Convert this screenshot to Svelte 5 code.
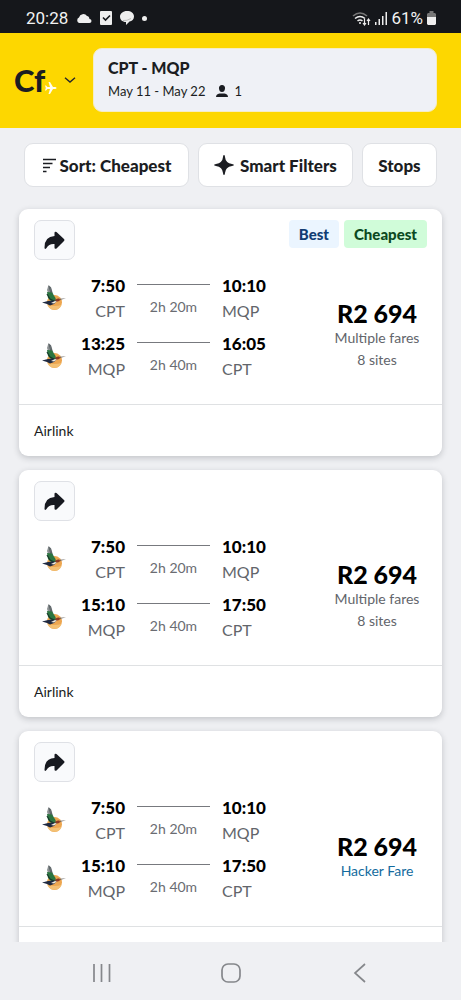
<script lang="ts">
  interface Leg {
    depart: string;
    from: string;
    duration: string;
    arrive: string;
    to: string;
  }

  interface Flight {
    badges: string[];
    legs: Leg[];
    price: string;
    notes: string[];
    hacker: boolean;
    airline: string;
  }

  const outbound: Leg = { depart: '7:50', from: 'CPT', duration: '2h 20m', arrive: '10:10', to: 'MQP' };
  const lateReturn: Leg = { depart: '15:10', from: 'MQP', duration: '2h 40m', arrive: '17:50', to: 'CPT' };

  const flights: Flight[] = [
    {
      badges: ['Best', 'Cheapest'],
      legs: [outbound, { depart: '13:25', from: 'MQP', duration: '2h 40m', arrive: '16:05', to: 'CPT' }],
      price: 'R2 694',
      notes: ['Multiple fares', '8 sites'],
      hacker: false,
      airline: 'Airlink'
    },
    {
      badges: [],
      legs: [outbound, lateReturn],
      price: 'R2 694',
      notes: ['Multiple fares', '8 sites'],
      hacker: false,
      airline: 'Airlink'
    },
    {
      badges: [],
      legs: [outbound, lateReturn],
      price: 'R2 694',
      notes: ['Hacker Fare'],
      hacker: true,
      airline: ''
    }
  ];
</script>

{#snippet bird()}
  <svg class="bird" viewBox="0 0 24 26" width="24" height="26" aria-hidden="true">
    <circle cx="12.500" cy="17.500" r="7.500" fill="#eda650" />
    <path d="M5.500 20a7.500 7.500 0 0 0 14 0q-7 2-14 0z" fill="#f3c074" />
    <path d="M6.500 0q2 1 3 4l2 6-5-1-1.500-4z" fill="#8b9092" />
    <path d="M7 1l2 8M8.500 2l1.500 7" stroke="#4c5659" stroke-width="0.800" />
    <path d="M5 7l5 .500 3.500 5.500.500 3-4 1-4-4z" fill="#2b7540" />
    <path d="M5 9l3 5 4 2" fill="none" stroke="#173a2a" stroke-width="1.200" />
    <path d="M0 17.500l6-1.500 5-.500 4 .500-3 3-4 1.500-3-1.500z" fill="#1f2940" />
    <path d="M9 18l4-2 2 .500-3 2z" fill="#f1ece0" />
    <path d="M13 15q1.500-2 4-1.500l1.500 1.500-2.500 1.500-2-.200z" fill="#8c3a26" />
    <path d="M17.500 13.800l6.500-.300-6 1.200z" fill="#55504c" />
  </svg>
{/snippet}

<div class="screen">
  <div class="status">
    <div class="status-side">
      <span>20:28</span>
      <svg width="16" height="12" viewBox="0 0 16 12" aria-hidden="true">
        <path d="M3 11a3 3 0 0 1 0-5.500A4.500 4.500 0 0 1 11 4q2 0 2.500 3a2 2 0 0 1 0 4z" fill="#eee" />
      </svg>
      <svg width="12" height="14" viewBox="0 0 12 14" aria-hidden="true">
        <rect width="12" height="14" rx="1" fill="#eee" />
        <path d="M3 6.500l2.500 2.500L10 4.500" fill="none" stroke="#15171b" stroke-width="1.600" />
      </svg>
      <svg width="14" height="14" viewBox="0 0 14 14" aria-hidden="true">
        <path d="M7 0c4 0 7 2 7 5.500 0 3-2 4.500-4.500 5L6 14V11C2 11 0 8.500 0 5.500S3 0 7 0z" fill="#eee" />
        <path d="M3 9.500q4 .500 8-2" fill="none" stroke="#999" stroke-width="0.600" />
      </svg>
      <span class="dot"></span>
    </div>
    <div class="status-side right">
      <svg width="19" height="15" viewBox="0 0 19 15" fill="none" stroke="#eee" stroke-width="1.600" aria-hidden="true">
        <path d="M1 5q7-6 14 0" stroke="#777" />
        <path d="M3 7.500q5-4 10 0M5.500 10q2.500-2 5 0" />
        <circle cx="8" cy="12" r="1" fill="#eee" stroke="none" />
        <path d="M12.500 8v6M11 12l1.500 2 1.500-2M16.500 14V8M15 10l1.500-2 1.500 2" stroke-width="1.200" />
      </svg>
      <svg width="12" height="13" viewBox="0 0 12 13" fill="#eee" aria-hidden="true">
        <path d="M0 10h1.500v3H0zM3.500 7H5v6H3.500zM7 4h1.500v9H7zM10.500 0H12v13h-1.500z" />
      </svg>
      <span>61%</span>
      <svg width="9" height="14" viewBox="0 0 9 14" aria-hidden="true">
        <path d="M2.500 0h4v2H8l1 1v4H0V3l1-1h1.500z" fill="#777" />
        <path d="M0 6h9v7l-1 1H1l-1-1z" fill="#eee" />
      </svg>
    </div>
  </div>

  <header>
    <button class="brand" aria-label="Cheapflights menu">
      <span class="brand-text">Cf</span>
      <svg class="plane" width="12" height="12" viewBox="0 0 12 12" fill="#fffdf0" aria-hidden="true">
        <path d="M11.500 6q0-1-1.500-1H8L5 0H3.500L5 5H2.500L1 3.500H0L.800 6 0 8.500h1L2.500 7H5l-1.500 5H5l3-5h2q1.500 0 1.500-1z" />
      </svg>
      <svg class="chevron" width="12" height="6" viewBox="0 0 12 6" fill="none" stroke="#25272b" stroke-width="1.400" aria-hidden="true">
        <path d="M1 .700l5 4.300 5-4.300" />
      </svg>
    </button>
    <button class="search">
      <strong>CPT - MQP</strong>
      <span class="search-meta">
        May 11 - May 22
        <svg width="12" height="12" viewBox="0 0 12 12" fill="#1b1d22" aria-hidden="true">
          <path d="M6 0a3 3 0 0 1 3 3.500Q8.700 7 6 7T3 3.500A3 3 0 0 1 6 0zM0 12q0-3 3.500-3.500h5Q12 9 12 12z" />
        </svg>
        <span>1</span>
      </span>
    </button>
  </header>

  <main>
    <div class="filters">
      <button class="sort">
        <svg width="14" height="15" viewBox="0 0 14 15" fill="none" stroke="#1b1d22" stroke-width="1.500" aria-hidden="true">
          <path d="M1 1.500h13M1 5.500h9.500M1 9.500h7M1 13.500h3.500" />
        </svg>
        Sort: Cheapest
      </button>
      <button class="smart">
        <svg width="20" height="20" viewBox="0 0 20 20" fill="#1b1d22" aria-hidden="true">
          <path d="M10 0q1 0 1 2 .500 6 7 7 2 .300 2 1t-2 1q-6.500 1-7 7 0 2-1 2t-1-2q-.500-6-7-7-2-.300-2-1t2-1q6.500-1 7-7 0-2 1-2z" />
        </svg>
        Smart Filters
      </button>
      <button class="stops">Stops</button>
    </div>

    <div class="results">
      {#each flights as flight}
        <article class="card">
          <div class="card-top">
            <button class="share" aria-label="Share">
              <svg width="21" height="19" viewBox="0 0 21 19" fill="#171920" aria-hidden="true">
                <path d="M10.500 2q0-2 2-1l7.500 7q1 1 0 2l-7.500 7.500q-2 1-2-1v-3.500Q5 12.500 2.500 17 .500 19 .500 16.500.500 5.500 10.500 5z" />
              </svg>
            </button>
            <div class="badges">
              {#each flight.badges as badge}
                <span class="badge {badge === 'Best' ? 'badge-best' : 'badge-cheapest'}">{badge}</span>
              {/each}
            </div>
          </div>

          <div class="card-body">
            <div class="legs">
              {#each flight.legs as leg}
                <div class="leg">
                  {@render bird()}
                  <div class="stop depart">
                    <strong>{leg.depart}</strong>
                    <span>{leg.from}</span>
                  </div>
                  <div class="duration">{leg.duration}</div>
                  <div class="stop">
                    <strong>{leg.arrive}</strong>
                    <span>{leg.to}</span>
                  </div>
                </div>
              {/each}
            </div>
            <div class="fare">
              <strong>{flight.price}</strong>
              {#each flight.notes as note}
                <span class:hacker={flight.hacker}>{note}</span>
              {/each}
            </div>
          </div>

          <div class="card-footer">{flight.airline}</div>
        </article>
      {/each}
    </div>
  </main>

  <nav>
    <button aria-label="Recent apps">
      <svg width="20" height="20" viewBox="0 0 20 20" stroke="#85878b" stroke-width="1.700" aria-hidden="true">
        <path d="M2 1v18M9.500 1v18M17.500 1v18" />
      </svg>
    </button>
    <button aria-label="Home">
      <svg width="20" height="20" viewBox="0 0 20 20" fill="none" stroke="#85878b" stroke-width="1.700" aria-hidden="true">
        <rect x="1" y="1" width="18" height="18" rx="6" />
      </svg>
    </button>
    <button aria-label="Back">
      <svg width="20" height="20" viewBox="0 0 20 20" fill="none" stroke="#85878b" stroke-width="1.700" aria-hidden="true">
        <path d="M15 1L5 10l10 9" />
      </svg>
    </button>
  </nav>
</div>

<style>
  :global(body) {
    background: #eff0f3;
  }

  .screen {
    height: 100vh;
    display: flex;
    flex-direction: column;
    overflow: hidden;
    color: #1b1d22;
    font-family: Lato, "Open Sans", sans-serif;
  }

  button {
    margin: 0;
    padding: 0;
    border: 0;
    background: none;
    color: inherit;
    font-family: inherit;
    cursor: pointer;
  }

  svg {
    flex: none;
  }

  .status {
    flex: none;
    height: 33px;
    box-sizing: border-box;
    padding: 3px 25px 0 26px;
    display: flex;
    align-items: center;
    justify-content: space-between;
    background: #15171b;
    color: #f2f2f2;
    font-family: Roboto, sans-serif;
    font-size: 17px;
  }

  .status-side {
    display: flex;
    align-items: center;
    gap: 8px;
  }

  .status-side.right {
    gap: 4px;
  }

  .dot {
    width: 5px;
    height: 5px;
    border-radius: 50%;
    background: #eee;
  }

  header {
    flex: none;
    box-sizing: border-box;
    padding: 15px 24px 16px 14px;
    display: flex;
    gap: 17px;
    background: #fdd700;
  }

  .brand {
    width: 62px;
    display: flex;
    align-items: center;
  }

  .brand-text {
    font-size: 31px;
    line-height: 32px;
    font-weight: 900;
  }

  .plane {
    margin-top: 16px;
  }

  .chevron {
    margin-left: auto;
  }

  .search {
    flex: 1;
    height: 64px;
    padding: 0 14px;
    display: flex;
    flex-direction: column;
    justify-content: center;
    border: 1px solid #f5edc4;
    border-radius: 9px;
    background: #eff1f6;
    text-align: left;
  }

  .search strong {
    font-size: 16px;
    line-height: 22px;
    font-weight: 900;
  }

  .search-meta {
    display: flex;
    align-items: center;
    font-size: 13px;
    line-height: 24px;
  }

  .search-meta svg {
    margin: 0 6px 0 11px;
  }

  main {
    flex: 1;
    min-height: 0;
    overflow: hidden;
    padding: 15px 19px 0;
  }

  .filters {
    display: flex;
    gap: 9px;
    padding: 0 5px;
    margin-bottom: 22px;
  }

  .filters button {
    height: 44px;
    display: flex;
    align-items: center;
    justify-content: center;
    gap: 6px;
    border: 1px solid #dfe1e5;
    border-radius: 9px;
    background: #fff;
    font-size: 17px;
    font-weight: 900;
    white-space: nowrap;
  }

  .filters .sort {
    flex: 165;
    gap: 4px;
  }

  .filters .smart {
    flex: 155;
  }

  .filters .stops {
    flex: 74;
  }

  .results {
    display: flex;
    flex-direction: column;
    gap: 14px;
  }

  .card {
    border-radius: 9px;
    background: #fff;
    box-shadow: 0 2px 6px rgba(30, 35, 45, 0.22);
  }

  .card-top {
    display: flex;
    justify-content: space-between;
    align-items: flex-start;
    padding: 11px 15px 0;
  }

  .share {
    width: 41px;
    height: 40px;
    display: flex;
    align-items: center;
    justify-content: center;
    border: 1px solid #dfe1e6;
    border-radius: 7px;
    background: #f9fafc;
  }

  .badges {
    display: flex;
    gap: 5px;
  }

  .badge {
    padding: 0 10px;
    border-radius: 4px;
    font-size: 15px;
    line-height: 28px;
    font-weight: 900;
  }

  .badge-best {
    background: #ebf5ff;
    color: #123d73;
  }

  .badge-cheapest {
    background: #d0fcd9;
    color: #0c4921;
  }

  .card-body {
    display: flex;
    justify-content: space-between;
    padding: 13px 15px 23px 23px;
  }

  .legs {
    display: flex;
    flex-direction: column;
    gap: 8px;
  }

  .leg {
    display: grid;
    grid-template-columns: 24px 47px 73px 56px;
    column-gap: 12px;
    align-items: center;
  }

  .stop {
    display: flex;
    flex-direction: column;
    line-height: 25px;
  }

  .stop.depart {
    align-items: flex-end;
  }

  .stop strong {
    color: #000;
    font-size: 17px;
    font-weight: 900;
  }

  .stop span {
    color: #62656b;
    font-size: 16px;
  }

  .duration {
    align-self: start;
    margin-top: 11px;
    padding-top: 12px;
    border-top: 1px solid #77797e;
    color: #6a6c72;
    font-size: 14px;
    line-height: 20px;
    text-align: center;
  }

  .fare {
    width: 100px;
    padding-top: 16px;
    display: flex;
    flex-direction: column;
    align-items: center;
    justify-content: center;
  }

  .fare strong {
    color: #000;
    font-size: 25px;
    line-height: 28px;
    font-weight: 900;
  }

  .fare span {
    color: #62656b;
    font-size: 14px;
    line-height: 22px;
  }

  .fare .hacker {
    color: #146b9e;
  }

  .card-footer {
    min-height: 22px;
    padding: 15px 15px 14px;
    border-top: 1px solid #dfe1e3;
    font-size: 14px;
    line-height: 22px;
  }

  nav {
    flex: none;
    box-sizing: border-box;
    height: 58px;
    padding: 3px 37px 0;
    display: flex;
    justify-content: space-between;
    background: #eff0f3;
  }

  nav button {
    flex: 1;
    display: flex;
    align-items: center;
    justify-content: center;
  }
</style>
